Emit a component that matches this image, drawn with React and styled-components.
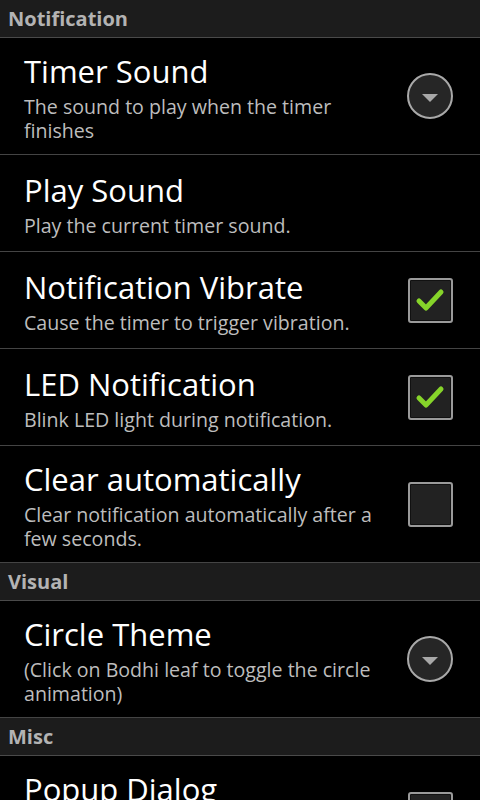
import React from "react";
import styled, { createGlobalStyle } from "styled-components";

const Global = createGlobalStyle`
  html, body { margin: 0; padding: 0; background: #000; }
  body { font-family: "Open Sans", "DejaVu Sans", sans-serif; overflow: hidden; }
`;

const Screen = styled.div`
  width: 480px;
  height: 800px;
  overflow: hidden;
  background: #000;
`;

const Category = styled.div`
  height: 38px;
  box-sizing: border-box;
  background: #1c1c1c;
  border-bottom: 1px solid #4a4a4a;
  padding-left: 8px;
  display: flex;
  align-items: center;
  color: #b3b3b3;
  font-weight: 700;
  font-size: 20px;
`;

const Row = styled.div`
  display: flex;
  align-items: center;
  min-height: 97px;
  box-sizing: border-box;
  border-bottom: 1px solid #444;
  padding: 0 27px 0 24px;
`;

const Text = styled.div`
  flex: 1;
  padding: 10px 0 11px;
`;

const Title = styled.div`
  color: #fff;
  font-size: 31px;
  line-height: 47px;
`;

const Summary = styled.div`
  color: #bdbdbd;
  font-size: 19.6px;
  line-height: 24px;
  padding-right: 8px;
`;

const Widget = styled.div`
  width: 46px;
  display: flex;
  justify-content: center;
  flex-shrink: 0;
  margin-left: 12px;
`;

const Dropdown = styled.div`
  width: 42px;
  height: 42px;
  border-radius: 50%;
  border: 2px solid #a9a9a9;
  background: #262626;
  display: flex;
  align-items: center;
  justify-content: center;
  box-shadow: 0 0 2px #000;
`;

const Triangle = styled.div`
  width: 0;
  height: 0;
  border-left: 8px solid transparent;
  border-right: 8px solid transparent;
  border-top: 8px solid #a8a8a8;
  margin-top: 3px;
`;

const Box = styled.div`
  width: 41px;
  height: 41px;
  border: 2px solid #9a9a9a;
  border-radius: 3px;
  background: #222;
  display: flex;
  align-items: center;
  justify-content: center;
  box-shadow: inset 0 0 0 1px #111;
`;

const Check = () => (
  <svg width="30" height="26" viewBox="0 0 30 26">
    <path d="M4 14 L11 21 L26 5" fill="none" stroke="#86d42a" strokeWidth="5" strokeLinecap="round" strokeLinejoin="round" />
  </svg>
);

const Pref = ({ title, summary, widget }) => (
  <Row>
    <Text>
      <Title>{title}</Title>
      {summary && <Summary>{summary}</Summary>}
    </Text>
    <Widget>
      {widget === "list" && (
        <Dropdown>
          <Triangle />
        </Dropdown>
      )}
      {widget === "on" && (
        <Box>
          <Check />
        </Box>
      )}
      {widget === "off" && <Box />}
    </Widget>
  </Row>
);

export default function App() {
  return (
    <Screen>
      <Global />
      <Category>Notification</Category>
      <Pref title="Timer Sound" summary="The sound to play when the timer finishes" widget="list" />
      <Pref title="Play Sound" summary="Play the current timer sound." />
      <Pref title="Notification Vibrate" summary="Cause the timer to trigger vibration." widget="on" />
      <Pref title="LED Notification" summary="Blink LED light during notification." widget="on" />
      <Pref title="Clear automatically" summary="Clear notification automatically after a few seconds." widget="off" />
      <Category>Visual</Category>
      <Pref title="Circle Theme" summary="(Click on Bodhi leaf to toggle the circle animation)" widget="list" />
      <Category>Misc</Category>
      <Pref title="Popup Dialog" summary="Show a popup dialog when the timer finishes" widget="off" />
    </Screen>
  );
}
